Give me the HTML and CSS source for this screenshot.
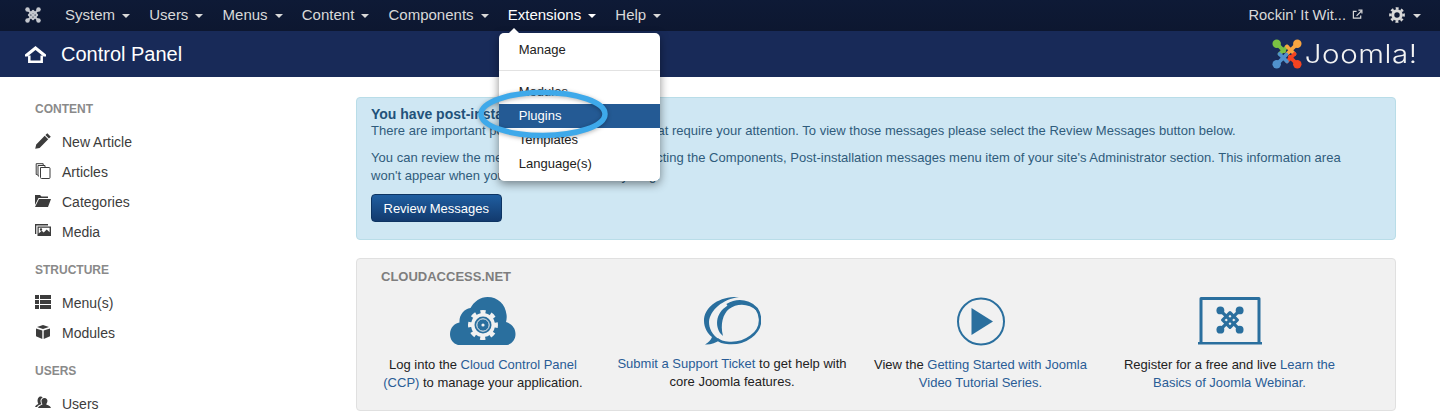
FILE: index.html
```html
<!DOCTYPE html>
<html lang="en">
<head>
<meta charset="utf-8">
<title>Control Panel</title>
<link rel="stylesheet" href="styles.css">
</head>
<body>
<svg class="defs" width="0" height="0" aria-hidden="true">
  <symbol id="jm" viewBox="0 0 32 32">
    <g fill="none" stroke="currentColor" stroke-linecap="round">
      <path stroke-width="3.600" d="M5.500 5.500 26.500 26.500M26.500 5.500 5.500 26.500"/>
      <path stroke-width="3.600" stroke-linejoin="round" d="M16 7.500 24.500 16 16 24.500 7.500 16z"/>
    </g>
    <g fill="currentColor"><circle cx="5" cy="5" r="4.500"/><circle cx="27" cy="5" r="4.500"/><circle cx="5" cy="27" r="4.500"/><circle cx="27" cy="27" r="4.500"/></g>
  </symbol>
</svg>

<header class="topbar">
  <svg class="brand-mark"><use href="#jm"/></svg>
  <nav class="mainnav">
    <a class="navitem">System<i class="caret"></i></a>
    <a class="navitem">Users<i class="caret"></i></a>
    <a class="navitem">Menus<i class="caret"></i></a>
    <a class="navitem">Content<i class="caret"></i></a>
    <a class="navitem">Components<i class="caret"></i></a>
    <div class="navitem open">Extensions<i class="caret"></i>
      <ul class="dropdown">
        <li class="dd-item">Manage</li>
        <li class="dd-divider"></li>
        <li class="dd-item">Modules</li>
        <li class="dd-item active">Plugins</li>
        <li class="dd-item">Templates</li>
        <li class="dd-item">Language(s)</li>
      </ul>
    </div>
    <a class="navitem">Help<i class="caret"></i></a>
  </nav>
  <div class="topright">
    <a class="sitelink">Rockin' It Wit...
      <svg class="ext" viewBox="0 0 12 12"><path d="M9.500 7v3h-8V2.500h3.500" fill="none" stroke="currentColor" stroke-width="1.300"/><path d="M5 7.500 10 2.500M7 1.200h3.800V5" fill="none" stroke="currentColor" stroke-width="1.300"/></svg>
    </a>
    <a class="usermenu">
      <svg class="gear" viewBox="0 0 16 16"><g transform="translate(8 8)"><circle r="6.600" fill="none" stroke="currentColor" stroke-width="2.500" stroke-dasharray="2.800 2.380" transform="rotate(-12)"/><circle r="4.200" fill="none" stroke="currentColor" stroke-width="3"/></g></svg>
      <i class="caret"></i>
    </a>
  </div>
</header>

<div class="subhead">
  <svg class="home" viewBox="0 0 21 17"><path d="M10.500 0 0 8.500V10.500H2.500L10.500 4 18.500 10.500H21V8.500z" fill="currentColor"/><path d="M4.300 9.500V15.700H16.700V9.500" fill="none" stroke="currentColor" stroke-width="2.500"/></svg>
  <h1 class="pagetitle">Control Panel</h1>
  <div class="logo">
    <svg class="logo-mark" viewBox="0 0 32 32">
      <g fill="none" stroke-width="4" stroke-linecap="round">
        <path d="M16 8 8 16" stroke="#7ac143"/>
        <path d="M16 8 24 16" stroke="#f9a541"/>
        <path d="M24 16 16 24" stroke="#f44321"/>
        <path d="M16 24 8 16" stroke="#5091cd"/>
        <path d="M5 5 13 13" stroke="#7ac143"/>
        <path d="M27 5 16.500 15.500" stroke="#f9a541"/>
        <path d="M27 27 19 19" stroke="#f44321"/>
        <path d="M5 27 15.500 16.500" stroke="#5091cd"/>
      </g>
      <circle cx="5" cy="5" r="4.500" fill="#7ac143"/><circle cx="27" cy="5" r="4.500" fill="#f9a541"/><circle cx="5" cy="27" r="4.500" fill="#5091cd"/><circle cx="27" cy="27" r="4.500" fill="#f44321"/>
    </svg>
    <span class="logo-text">Joomla!</span>
  </div>
</div>

<div class="layout">
  <aside class="sidebar">
    <h2 class="side-title">CONTENT</h2>
    <a class="side-link"><svg class="side-icon" viewBox="0 0 16 16"><path fill="currentColor" d="M12.300.2l3.500 3.500-1.900 1.900-3.500-3.500zM9.700 2.800l3.500 3.500-8.600 8.600L.2 15.800l1-4.400z"/></svg>New Article</a>
    <a class="side-link"><svg class="side-icon" viewBox="0 0 16 16"><path fill="none" stroke="currentColor" stroke-width="1" d="M5.500 4.500h8.500a1 1 0 0 1 1 1v9a1 1 0 0 1-1 1H6.500a1 1 0 0 1-1-1zM4 13H3V2.500h7V4M2.500 11.500H1.200V.7h7V2.500"/></svg>Articles</a>
    <a class="side-link"><svg class="side-icon" viewBox="0 0 16 16"><path fill="currentColor" d="M0 2h5l1.500 1.500H13V5H3.500L0 12zM4 6h12l-3 8H0z"/></svg>Categories</a>
    <a class="side-link"><svg class="side-icon" viewBox="0 0 16 16"><path fill="currentColor" fill-rule="evenodd" d="M0 1h13v1.500H1.300V11H0zM2.500 3.500H16V13H2.500zM3.700 4.700v5.800l3-2.700 2 1.700 3-3 2.900 2.700V4.700zM6 5.300a1.200 1.200 0 1 1 0 2.400 1.200 1.200 0 0 1 0-2.400z"/></svg>Media</a>
    <h2 class="side-title">STRUCTURE</h2>
    <a class="side-link"><svg class="side-icon" viewBox="0 0 16 16"><path fill="currentColor" d="M0 1h4v4H0zM5 1h11v4H5zM0 6h4v4H0zM5 6h11v4H5zM0 11h4v4H0zM5 11h11v4H5z"/></svg>Menu(s)</a>
    <a class="side-link"><svg class="side-icon" viewBox="0 0 16 16"><path fill="currentColor" d="M8 1l6 2-6 2-6-2zM1 4.500l6.300 2.100V15L1 12.300zM15 4.500 8.700 6.600V15l6.300-2.700z"/></svg>Modules</a>
    <h2 class="side-title">USERS</h2>
    <a class="side-link"><svg class="side-icon" viewBox="0 0 16 16"><path fill="currentColor" d="M9.500 3a3 3 0 0 1 2.800 4c-.3 1-.8 1.600-1.100 2.300 0 .7 3.800 1 4.800 3.700H3c.6-2.300 4.400-3 4.500-3.700C7 8.500 6.700 8 6.600 7a3 3 0 0 1 2.900-4zM5.500 1.500c1 0 1.700.4 2.200 1C6 3.200 5.200 5 5.600 7c.1.800.4 1.500.8 2-.9.700-3.500 1.100-4.300 3H0c.500-2 3.200-2.600 3.300-3.200C3 8 2.700 7.500 2.600 6.500c-.3-2.500 1-5 2.900-5z"/></svg>Users</a>
  </aside>

  <main class="content">
    <section class="alert">
      <h4 class="alert-title">You have post-installation messages</h4>
      <p class="alert-lead">There are important post-installation messages that require your attention. To view those messages please select the Review Messages button below.</p>
      <p class="alert-body">You can review the messages at any time by selecting the Components, Post-installation messages menu item of your site's Administrator section. This information area won't appear when you have reviewed everything.</p>
      <button class="btn">Review Messages</button>
    </section>

    <section class="panel">
      <h3 class="panel-title">CLOUDACCESS.NET</h3>
      <div class="panel-grid">
        <div class="promo promo-cloud">
          <svg class="promo-icon" viewBox="0 0 66 50">
            <path fill="#2a6f9e" d="M8 48C3 46.500 0 42.500 0 37 0 31 4.500 26 9.500 25.500 9 18 14 12 20.500 11 24 4.500 30.500 0 37.500 0 48 0 55.500 7.500 56.500 17.500 57 20.500 56.500 23 56 25 62 27 65.500 31.500 65.500 37 65.500 42.500 62 47 57 48z"/>
            <g transform="translate(33 28)">
              <circle r="13" fill="none" stroke="#f1f1f1" stroke-width="4" stroke-dasharray="5 5.210" transform="rotate(-101)"/>
              <circle r="12" fill="#f1f1f1"/>
              <circle r="8.500" fill="#2a6f9e"/>
              <circle r="6.200" fill="none" stroke="#f1f1f1" stroke-width="1"/>
              <circle r="1.600" fill="#f1f1f1"/>
            </g>
          </svg>
          <p class="promo-text">Log into the <a class="link">Cloud Control Panel (CCP)</a> to manage your application.</p>
        </div>
        <div class="promo promo-ticket">
          <svg class="promo-icon" viewBox="0 0 58 48">
            <path fill="#2a6f9e" d="M36 0C16-1 1 10 1 24 1 31 5 37 9 40 8 43 5 46 2 47.500 7 48 13 46 17 43 9 38 6 31 6 25 7 13 20 2 36 0z"/>
            <path fill="none" stroke="#2a6f9e" stroke-width="2.500" d="M24 8C38 0 56 6 57 22 58 36 42 47 26 46 20 45.500 16 44 14 42"/>
            <path fill="#2a6f9e" d="M17 36C11 26 14 12 30 6 42 2 52 8 54 14 46 6 34 6 26 12 20 17 17 27 20 39z"/>
          </svg>
          <p class="promo-text"><a class="link">Submit a Support Ticket</a> to get help with core Joomla features.</p>
        </div>
        <div class="promo promo-video">
          <svg class="promo-icon" viewBox="0 0 50 50"><circle cx="25" cy="24.500" r="23" fill="none" stroke="#2a6f9e" stroke-width="2"/><path fill="#2a6f9e" d="M15.500 11 37 24.500 15.500 38z"/></svg>
          <p class="promo-text">View the <a class="link">Getting Started with Joomla Video Tutorial Series.</a></p>
        </div>
        <div class="promo promo-webinar">
          <svg class="promo-icon" viewBox="0 0 64 48">
            <path fill="none" stroke="#2a6f9e" stroke-width="3" stroke-linejoin="round" d="M3 45.500V1.500h58v44"/>
            <path fill="#2a6f9e" d="M0 45h64v2.500H0z"/>
            <svg x="18" y="9" width="28" height="28" viewBox="0 0 32 32" color="#2a6f9e"><use href="#jm"/></svg>
          </svg>
          <p class="promo-text">Register for a free and live <a class="link">Learn the Basics of Joomla Webinar.</a></p>
        </div>
      </div>
    </section>
  </main>
</div>

<svg class="callout" viewBox="0 0 140 54"><ellipse cx="70" cy="27" rx="62" ry="21.500" fill="none" stroke="#3ea9ea" stroke-width="5.500"/></svg>
</body>
</html>
```

FILE: styles.css
```css
* { box-sizing: border-box; }
html, body { margin: 0; padding: 0; }
body {
  position: relative;
  height: 420px;
  overflow: hidden;
  background: #fff;
  color: #333;
  font: 13px/18px "Liberation Sans", Arial, sans-serif;
}
.defs { position: absolute; }

/* top bar */
.topbar {
  height: 31px;
  display: flex;
  align-items: center;
  padding: 0 19px 2px 25px;
  background: linear-gradient(#0e1a36, #0d1730);
  color: #d9d9d9;
  font-size: 15px;
}
.brand-mark { width: 16px; height: 16px; color: #c4c7ce; flex: none; }
.mainnav { display: flex; margin-left: 24px; gap: 19.200px; height: 29px; align-items: center; }
.navitem { position: relative; display: flex; align-items: center; height: 29px; white-space: nowrap; }
.navitem.open { color: #fff; }
.caret {
  display: inline-block;
  width: 0; height: 0;
  margin-left: 7px; margin-top: 2px;
  border-left: 4px solid transparent;
  border-right: 4px solid transparent;
  border-top: 4px solid currentColor;
}
.dropdown {
  position: absolute;
  top: 33px; left: -9px;
  width: 161px;
  margin: 0; padding: 5px 0;
  list-style: none;
  background: #fff;
  border-radius: 5px;
  box-shadow: 0 3px 10px rgba(0,0,0,.45);
  color: #222;
  font-size: 13px;
  z-index: 5;
}
.dropdown::before {
  content: "";
  position: absolute;
  top: -5px; left: 9px;
  border-left: 6px solid transparent;
  border-right: 6px solid transparent;
  border-bottom: 6px solid #fff;
}
.dd-item { height: 24px; line-height: 24px; padding-left: 20px; }
.dd-item.active { background: #245a94; color: #fff; }
.dd-divider { height: 1px; margin: 8px 0 9px; background: #e2e2e2; }
.topright { margin-left: auto; display: flex; align-items: center; font-size: 14.700px; }
.sitelink { display: flex; align-items: center; gap: 6px; }
.ext { width: 11px; height: 11px; }
.usermenu { display: flex; align-items: center; margin-left: 26px; color: #d9d9d9; }
.gear { width: 16px; height: 16px; }
.usermenu .caret { margin-left: 8px; }

/* page heading */
.subhead {
  height: 46px;
  display: flex;
  align-items: center;
  padding: 0 22px 0 25px;
  background: #182a58;
  color: #fff;
}
.home { width: 21px; height: 17px; flex: none; }
.pagetitle { margin: 0 0 0 15px; font-size: 20px; font-weight: 400; line-height: 46px; }
.logo { margin-left: auto; display: flex; align-items: center; gap: 20.500px; }
.logo-mark { width: 30px; height: 30px; }
.logo-text {
  font: 300 25px/30px Inter, "Open Sans", sans-serif;
  letter-spacing: .5px;
  color: #f3f3f3;
  transform: scaleX(1.18);
  transform-origin: right center;
}

/* layout */
.layout { display: flex; align-items: flex-start; padding: 20px 44px 0 35px; }
.sidebar { width: 321px; flex: none; padding-top: 3px; }
.side-title { margin: 0; font-size: 12px; line-height: 18px; font-weight: 700; color: #8a8a8a; padding-bottom: 9px; }
.side-link { display: flex; align-items: center; height: 30px; font-size: 14px; color: #3c3c3c; }
.side-icon { width: 16px; height: 16px; margin-right: 11px; flex: none; position: relative; top: -1px; }
.side-link + .side-title { margin-top: 14px; }
.content { flex: 1; min-width: 0; }

/* alert */
.alert {
  height: 143px;
  padding: 8px 14px;
  background: #cfe7f3;
  border: 1px solid #b9dde8;
  border-radius: 4px;
  color: #2f5c7c;
}
.alert-title { margin: 0; font-size: 14px; line-height: 17px; font-weight: 700; color: #22527a; }
.alert-lead { margin: 0; line-height: 15px; letter-spacing: .02px; }
.alert-body { margin: 11px 30px 0 0; line-height: 18px; letter-spacing: .02px; }
.btn {
  display: block;
  height: 28px;
  margin-top: 9px;
  padding: 0 11.500px;
  border: 1px solid #0d3462;
  border-radius: 4px;
  background: linear-gradient(#1f5ea0, #123a6e);
  color: #fff;
  font: 13px "Liberation Sans", Arial, sans-serif;
}

/* panel */
.panel {
  height: 153px;
  margin-top: 18px;
  padding: 9px 0 0;
  background: #f1f1f1;
  border: 1px solid #e0e0e0;
  border-radius: 4px;
}
.panel-title { margin: 0 0 0 24px; font-size: 13px; line-height: 18px; font-weight: 700; color: #7e7e7e; }
.panel-grid { display: grid; grid-template-columns: 250px 250px 249px 249px; margin-top: 11px; }
.promo { text-align: center; }
.promo-cloud { padding: 0 23px 0 25px; }
.promo-ticket { padding: 0 8px; }
.promo-video { padding: 0 15px 0 13px; }
.promo-webinar { padding: 0 17px 0 15px; }
.promo-icon { display: block; width: 66px; height: 50px; margin: 0 auto; }
.promo-webinar .promo-icon { width: 64px; height: 48px; }
.promo-ticket .promo-icon { width: 58px; height: 48px; }
.promo-text { margin: 9px 0 0; font-size: 13px; line-height: 18px; color: #222; }
.promo-ticket .promo-text { margin-top: 10px; }
.promo-webinar .promo-text { margin-top: 11px; }
.link { color: #295c96; }

/* annotation ring */
.callout {
  position: absolute;
  left: 473px; top: 87px;
  width: 140px; height: 54px;
  filter: drop-shadow(0 1px 2px rgba(0,0,0,.3));
  z-index: 10;
}
```
